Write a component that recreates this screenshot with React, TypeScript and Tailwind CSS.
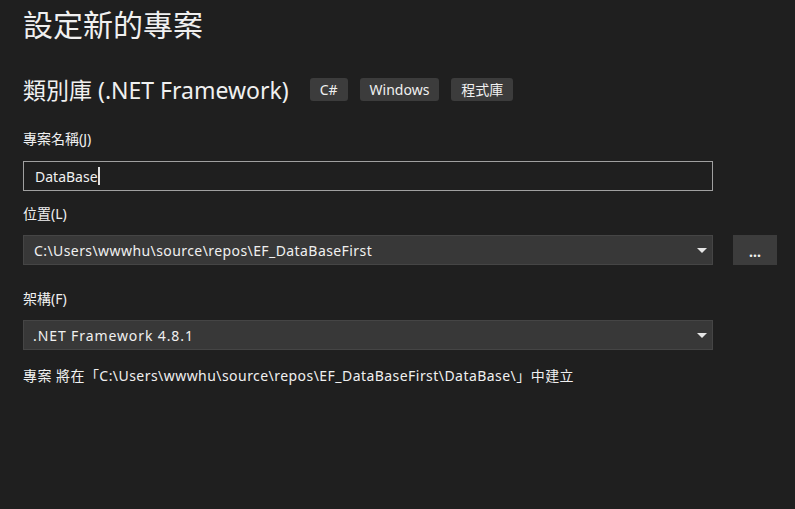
import React from 'react';

const font = { fontFamily: '"Noto Sans", "Noto Sans CJK TC", sans-serif' };

function Caret() {
  return (
    <svg width="12" height="8" viewBox="0 0 12 8" className="shrink-0">
      <path d="M1 2h10L6 7z" fill="#e6e6e6" />
    </svg>
  );
}

function Tag({ children }: { children: React.ReactNode }) {
  return (
    <span className="bg-[#3c3c3c] rounded-[3px] px-[10px] h-[23px] flex items-center text-[14px] text-[#f0f0f0]">
      {children}
    </span>
  );
}

export default function App() {
  return (
    <div className="w-[795px] h-[509px] bg-[#1f1f1f] text-[#f0f0f0] pl-[23px] pt-[5px]" style={font}>
      <h1 className="text-[30px] leading-[40px] font-normal">設定新的專案</h1>

      <div className="flex items-center mt-[29px] h-[32px]">
        <h2 className="text-[23px] leading-[32px] font-normal mr-[21px]">類別庫 (.NET Framework)</h2>
        <div className="flex gap-[12px] -mt-[2px]">
          <Tag>C#</Tag>
          <Tag>Windows</Tag>
          <Tag>程式庫</Tag>
        </div>
      </div>

      <div className="mt-[23px] text-[14px] leading-[20px]">專案名稱(J)</div>
      <div className="mt-[12px] w-[690px] h-[30px] border border-[#a0a0a0] flex items-center pl-[11px] text-[14px]">
        DataBase
        <span className="inline-block w-[2px] h-[18px] bg-[#e0e0e0]" />
      </div>

      <div className="mt-[13px] text-[14px] leading-[20px]">位置(L)</div>
      <div className="mt-[11px] flex items-center gap-[20px]">
        <div className="w-[690px] h-[30px] bg-[#383838] border border-[#454545] flex items-center justify-between pl-[10px] pr-[4px] text-[14px]">
          <span className="tracking-[0.42px]">C:\Users\wwwhu\source\repos\EF_DataBaseFirst</span>
          <Caret />
        </div>
        <div className="w-[44px] h-[30px] bg-[#3c3c3c] flex items-end justify-center pb-[6px] text-[14px] font-bold leading-none">
          ...
        </div>
      </div>

      <div className="mt-[24px] text-[14px] leading-[20px]">架構(F)</div>
      <div className="mt-[11px] w-[690px] h-[30px] bg-[#383838] border border-[#454545] flex items-center justify-between pl-[9px] pr-[4px] text-[14px]">
        <span className="tracking-[0.9px]">.NET Framework 4.8.1</span>
        <Caret />
      </div>

      <div className="mt-[16px] text-[14px] leading-[20px] tracking-[0.45px]">
        專案 將在「C:\Users\wwwhu\source\repos\EF_DataBaseFirst\DataBase\」中建立
      </div>
    </div>
  );
}
